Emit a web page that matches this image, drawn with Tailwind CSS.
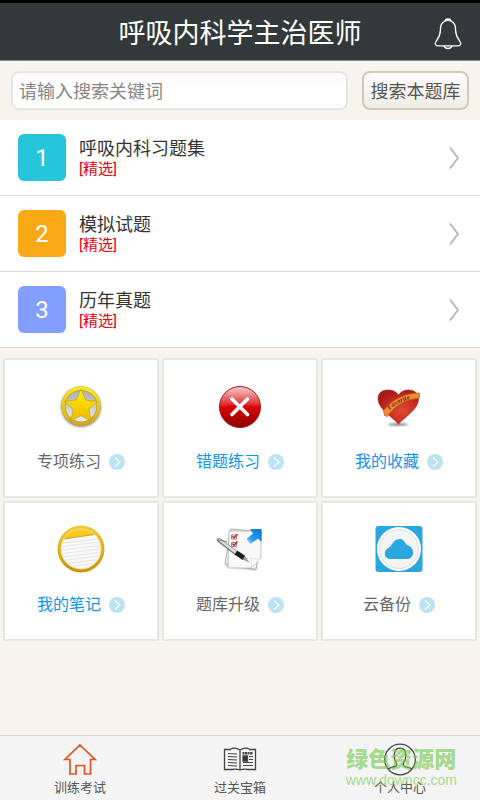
<!DOCTYPE html>
<html lang="zh-CN">
<head>
    <meta charset="UTF-8">
    <meta name="viewport" content="width=device-width, initial-scale=1.0">
    <title>呼吸内科学主治医师</title>
    <script src="https://cdn.jsdelivr.net/npm/@tailwindcss/browser@4"></script>
</head>
<body class="min-h-screen flex flex-col bg-[#f7f4ed] font-['Roboto','Noto_Sans_CJK_SC',sans-serif] text-[#333]">
    <header class="grid grid-cols-[56px_1fr_56px] items-center h-[61px] pt-1 bg-[#33383b] border-t-3 border-t-black border-b border-b-[#85898a]">
        <h1 class="col-start-2 text-center text-[27px] leading-8 text-white whitespace-nowrap">呼吸内科学主治医师</h1>
        <button type="button" aria-label="消息" class="justify-self-end mr-4">
            <svg class="w-8 h-8" viewBox="0 0 32 32" fill="none" stroke="#fff" stroke-width="1.3" stroke-linejoin="round">
                <path d="M13.2 2.8C13.5 .4 18.500 .4 18.800 2.800C22.300 4.200 23.600 7.500 23.600 12C23.600 18 25.500 20 28 23.500C29.700 26 28.700 27.800 26 27.800H6C3.300 27.800 2.300 26 4 23.500C6.500 20 8.400 18 8.400 12C8.400 7.500 9.700 4.200 13.200 2.800Z"/>
                <path d="M13.200 2.800Q16 1.800 18.800 2.800M12 28Q13 30.500 16 30.500Q19 30.500 20 28"/>
            </svg>
        </button>
    </header>

    <form class="flex gap-3.5 px-[11px] py-2.5">
        <input type="search" aria-label="搜索关键词" placeholder="请输入搜索关键词"
            class="flex-1 min-w-0 h-[39px] px-1.5 pt-0.5 text-lg rounded-lg border-2 border-[#e3e5e6] bg-linear-to-b from-[#fbfaf8] to-white to-50% placeholder:text-[#868686] outline-none">
        <button type="submit"
            class="h-[39px] w-[107px] pt-0.5 text-lg whitespace-nowrap text-[#555] rounded-lg border-2 border-[#d0cabd] bg-linear-to-b from-[#fdfcfa] to-[#f0ede6]">搜索本题库</button>
    </form>

    <ul class="bg-white">
        <li class="border-b border-[#d9d9d9]">
            <a href="#" class="flex items-center h-[75px] pl-[18px] pr-5">
                <span class="flex items-center justify-center w-12 h-[47px] rounded-md bg-[#26c6da] text-2xl text-white">1</span>
                <span class="flex-1 flex flex-col ml-[13px] pt-0.5">
                    <span class="text-lg leading-5">呼吸内科习题集</span>
                    <span class="text-[15px] leading-5 text-[#e5000b]">[精选]</span>
                </span>
                <svg class="w-3 h-6" viewBox="0 0 12 24" fill="none" stroke="#b5b5b5" stroke-width="1.8"><path d="M2 1.500L10 12L2 22.500"/></svg>
            </a>
        </li>
        <li class="border-b border-[#d9d9d9]">
            <a href="#" class="flex items-center h-[75px] pl-[18px] pr-5">
                <span class="flex items-center justify-center w-12 h-[47px] rounded-md bg-[#faa916] text-2xl text-white">2</span>
                <span class="flex-1 flex flex-col ml-[13px] pt-0.5">
                    <span class="text-lg leading-5">模拟试题</span>
                    <span class="text-[15px] leading-5 text-[#e5000b]">[精选]</span>
                </span>
                <svg class="w-3 h-6" viewBox="0 0 12 24" fill="none" stroke="#b5b5b5" stroke-width="1.8"><path d="M2 1.500L10 12L2 22.500"/></svg>
            </a>
        </li>
        <li class="border-b border-[#d9d9d9]">
            <a href="#" class="flex items-center h-[75px] pl-[18px] pr-5">
                <span class="flex items-center justify-center w-12 h-[47px] rounded-md bg-[#829fff] text-2xl text-white">3</span>
                <span class="flex-1 flex flex-col ml-[13px] pt-0.5">
                    <span class="text-lg leading-5">历年真题</span>
                    <span class="text-[15px] leading-5 text-[#e5000b]">[精选]</span>
                </span>
                <svg class="w-3 h-6" viewBox="0 0 12 24" fill="none" stroke="#b5b5b5" stroke-width="1.8"><path d="M2 1.500L10 12L2 22.500"/></svg>
            </a>
        </li>
    </ul>

    <!-- round arrow shared by all tiles -->
    <svg class="hidden">
        <symbol id="go" viewBox="0 0 16 16">
            <circle cx="8" cy="8" r="8" fill="#bce3f1"/>
            <path d="M6 3.500L11 8L6 12.500" fill="none" stroke="#fff" stroke-width="1.1"/>
        </symbol>
    </svg>

    <main class="grid grid-cols-3 gap-[3px] px-[3px] pt-2.5 text-base text-[#666]">
        <a href="#" class="flex flex-col items-center h-[140px] pt-[22px] bg-white border-2 border-[#e5e7e5] rounded-xs">
            <svg class="w-12 h-12" viewBox="0 0 48 48">
                <defs>
                    <linearGradient id="gold" x1="0" y1="0" x2="0" y2="1"><stop offset="0" stop-color="#f7ea1c"/><stop offset="1" stop-color="#dca81c"/></linearGradient>
                    <linearGradient id="star" x1="0" y1="0" x2="0" y2="1"><stop offset="0" stop-color="#fff000"/><stop offset="1" stop-color="#efb800"/></linearGradient>
                    <linearGradient id="well" x1="0" y1="0" x2="0" y2="1"><stop offset="0" stop-color="#aaa"/><stop offset="1" stop-color="#eee"/></linearGradient>
                    <filter id="soft" x="-30%" y="-30%" width="160%" height="160%"><feGaussianBlur stdDeviation="1.2"/></filter>
                </defs>
                <circle cx="24" cy="25" r="20" fill="#555" opacity=".65" filter="url(#soft)"/>
                <circle cx="24" cy="24" r="17" fill="url(#well)"/>
                <circle cx="24" cy="24" r="17.500" fill="none" stroke="#b39a1a" stroke-width="4"/>
                <circle cx="24" cy="24" r="17.800" fill="none" stroke="url(#gold)" stroke-width="3.400"/>
                <path d="M24 7L28.800 18L40.500 19.500L31.800 27.500L34.500 39.500L24 33.500L13.500 39.500L16.200 27.500L7.500 19.500L19.200 18Z" fill="url(#star)" stroke="#a58c24" stroke-width=".5"/>
            </svg>
            <span class="flex items-center gap-2 mt-5">专项练习<svg class="w-4 h-4"><use href="#go"/></svg></span>
        </a>
        <a href="#" class="flex flex-col items-center h-[140px] pt-[22px] bg-white border-2 border-[#e5e7e5] rounded-xs text-[#1094e8]">
            <svg class="w-12 h-12" viewBox="0 0 48 48">
                <defs>
                    <linearGradient id="red" x1="0" y1="0" x2="0" y2="1"><stop offset="0" stop-color="#d92a2a"/><stop offset=".5" stop-color="#dc0505"/><stop offset="1" stop-color="#800"/></linearGradient>
                    <linearGradient id="gloss" x1="0" y1="0" x2="0" y2="1"><stop offset="0" stop-color="#fff" stop-opacity=".75"/><stop offset="1" stop-color="#fff" stop-opacity=".05"/></linearGradient>
                </defs>
                <circle cx="24" cy="25" r="20.500" fill="url(#red)" stroke="#a31d1d"/>
                <path d="M4 25A20 20 0 0 1 44 25Q24 21 4 25Z" fill="url(#gloss)"/>
                <path d="M16 17L31.500 32.500M31.500 17L16 32.500" stroke="#fff" stroke-width="3.600" stroke-linecap="round"/>
            </svg>
            <span class="flex items-center gap-2 mt-5">错题练习<svg class="w-4 h-4"><use href="#go"/></svg></span>
        </a>
        <a href="#" class="flex flex-col items-center h-[140px] pt-[22px] bg-white border-2 border-[#e5e7e5] rounded-xs text-[#1094e8]">
            <svg class="w-12 h-12" viewBox="0 0 48 48">
                <defs>
                    <radialGradient id="heart" cx=".6" cy=".6" r=".6"><stop offset="0" stop-color="#e04a35"/><stop offset=".6" stop-color="#c92d22"/><stop offset="1" stop-color="#a51c18"/></radialGradient>
                </defs>
                <ellipse cx="23" cy="42.500" rx="10" ry="1.500" fill="#555" opacity=".7" filter="url(#soft)"/>
                <path d="M23.500 42C16 34 3.500 27 3 17C3 10 8 8 13 8C18 8 21 9.500 23.500 13C26 9.500 29 8 33.500 8C39 8 43.500 11 43.500 17C43.500 27 31 34 23.500 42Z" fill="url(#heart)" stroke="#9d211a" stroke-width=".6"/>
                <path d="M8.500 28.500C18 16.500 31 11 44.500 11L44.500 15.500L42.500 16.500C30 17.500 19 24 12.500 34.500L9.500 33.500Z" fill="#f08a35" stroke="#bb5719" stroke-width=".7"/>
                <path id="ribbon" d="M14.500 28Q24 19 38 16.500" fill="none"/>
                <text class="font-['Liberation_Serif',serif] font-bold" font-size="6.500" fill="#7c250b"><textPath href="#ribbon">Favorite</textPath></text>
            </svg>
            <span class="flex items-center gap-2 mt-5">我的收藏<svg class="w-4 h-4"><use href="#go"/></svg></span>
        </a>
        <a href="#" class="flex flex-col items-center h-[140px] pt-[22px] bg-white border-2 border-[#e5e7e5] rounded-xs text-[#1094e8]">
            <svg class="w-12 h-12" viewBox="0 0 48 48">
                <defs>
                    <linearGradient id="rim" x1="0" y1="0" x2="0" y2="1"><stop offset="0" stop-color="#f2cb35"/><stop offset="1" stop-color="#c4930f"/></linearGradient>
                    <clipPath id="page"><circle cx="24" cy="24" r="20"/></clipPath>
                </defs>
                <circle cx="24" cy="24" r="23.500" fill="url(#rim)"/>
                <g clip-path="url(#page)">
                    <rect width="48" height="48" fill="#f9f9f9"/>
                    <path d="M0 0H48V8L7 14L0 14Z" fill="#fcc91b"/>
                    <path d="M5 14.300L43 8.700" stroke="#c89412" stroke-width=".8"/>
                    <path d="M2 18.500L46 13M2 22L46 16.500M2 25.500L46 20M2 29L46 23.500M2 32.500L46 27M2 36L46 30.500M2 39.500L46 34M2 43L46 37.500M2 46.500L46 41" stroke="#e2e2e2" stroke-width=".9"/>
                </g>
                <circle cx="24" cy="24" r="20" fill="none" stroke="#f8e48c" stroke-width="1"/>
            </svg>
            <span class="flex items-center gap-2 mt-5">我的笔记<svg class="w-4 h-4"><use href="#go"/></svg></span>
        </a>
        <a href="#" class="flex flex-col items-center h-[140px] pt-[22px] bg-white border-2 border-[#e5e7e5] rounded-xs">
            <svg class="w-12 h-12" viewBox="0 0 48 48">
                <defs>
                    <linearGradient id="up" x1="1" y1="0" x2="0" y2="1"><stop offset="0" stop-color="#0875da"/><stop offset=".6" stop-color="#2795ed"/><stop offset="1" stop-color="#a8d8fa"/></linearGradient>
                </defs>
                <path d="M14 5L44 7L40 45L10 41Z" fill="#777" opacity=".7" filter="url(#soft)"/>
                <path d="M15 4L46 7L40 44.500L9 39Z" fill="#eee" stroke="#999" stroke-width=".7"/>
                <path d="M13 6H45V33L35 43H12Z" fill="#f8f8f8" stroke="#aaa" stroke-width=".7"/>
                <path d="M35 43Q37 38 35 33Q40 36 45 33Z" fill="#fff" stroke="#ccc" stroke-width=".5"/>
                <path d="M15.500 10H20.500V14H15.500ZM15.500 17.500H20.500V21.500H15.500Z" fill="#fff" stroke="#a55" stroke-width=".8"/>
                <path d="M16.500 11L18 13L21.500 9M16.500 18.500L18 20.500L21.500 16.500" fill="none" stroke="#c1272d" stroke-width="1.400"/>
                <path d="M3 15L20 28" stroke="#777" stroke-width="4.400" stroke-linecap="round"/>
                <path d="M3 14.500L20 27.500" stroke="#ddd" stroke-width="2.600" stroke-linecap="round"/>
                <path d="M1.500 14.500L11 17" stroke="#777" stroke-width="1"/>
                <path d="M20 27.500L28 33" stroke="#1c1c1c" stroke-width="4.800"/>
                <path d="M28.800 31L33.500 37.500L26.500 34.500Z" fill="#999"/>
                <path d="M34 4L45.500 4V17L42 13.500L34.500 19L30.500 14L37 8.500Z" fill="url(#up)"/>
            </svg>
            <span class="flex items-center gap-2 mt-5">题库升级<svg class="w-4 h-4"><use href="#go"/></svg></span>
        </a>
        <a href="#" class="flex flex-col items-center h-[140px] pt-[22px] bg-white border-2 border-[#e5e7e5] rounded-xs">
            <svg class="w-12 h-12" viewBox="0 0 48 48">
                <rect x=".5" y="1" width="47" height="46" rx="3" fill="#2aa7df"/>
                <circle cx="24" cy="24" r="22" fill="#fff"/>
                <circle cx="24" cy="24" r="19.500" fill="#f4f4f4" stroke="#dfdfdf" stroke-width="1"/>
                <path d="M15 34C8.500 34 8 25 14 22.500C16 21.500 17 18.500 19.500 16C22 13.500 26.500 13 29 16C30.500 18 31 19.500 33 20.500C40.500 23 39.500 34 32 34Z" fill="#2aa7df"/>
            </svg>
            <span class="flex items-center gap-2 mt-5">云备份<svg class="w-4 h-4"><use href="#go"/></svg></span>
        </a>
    </main>

    <nav class="relative grid grid-cols-3 h-[65px] mt-auto pt-[7px] bg-[#f4f4f4] border-t border-[#ddd9d6] text-[13px] leading-[22px] text-[#555]">
        <a href="#" class="flex flex-col items-center">
            <svg class="w-9 h-[34px]" viewBox="0 0 36 34" fill="none" stroke="#e25320" stroke-width="1.7">
                <path d="M18 2L33 16.500H28.500V31H22.500V22.500H14V31H8V16.500H3Z"/>
            </svg>
            训练考试
        </a>
        <a href="#" class="flex flex-col items-center">
            <svg class="w-9 h-[34px]" viewBox="0 0 36 34" fill="none" stroke="#444" stroke-width="1.300">
                <path d="M18 7Q14 4.500 10 5.500L8 6.500H2.500V26.500H10Q14 25.500 18 27Q22 25.500 26 26.500H33.500V6.500H28L26 5.500Q22 4.500 18 7V27"/>
                <path d="M6 10.500L15 11M6 13.500L15 14M6 16.500L15 17M6 19.500L15 20M6 22.500L15 23M21 22.500H31M21 19.500H31M27 13.500H31M27 16.500H31" stroke-width="1.200"/>
                <path d="M20.500 10.200H31" stroke-width="2.500" stroke-dasharray="2 .5"/>
                <path d="M21 13H25.500V18H21Z" fill="#333"/>
            </svg>
            过关宝箱
        </a>
        <a href="#" class="flex flex-col items-center">
            <svg class="w-9 h-[34px]" viewBox="0 0 36 34" fill="none" stroke="#444" stroke-width="1.300">
                <circle cx="18" cy="16.500" r="15.300"/>
                <path d="M6 26Q8 24.500 13 23.500Q15.500 22.500 14.500 20C12 17 12 13 12.500 10C13.500 3.500 22.500 3.500 23.500 10C24 13 24 17 21.500 20C20.500 22.500 23 23.500 23 23.500Q28 24.500 30 26"/>
            </svg>
            个人中心
        </a>
        <p class="absolute right-[23px] bottom-[10px] flex flex-col items-center text-[#77c94c]/65 whitespace-nowrap pointer-events-none">
            <span class="text-[22px] leading-5 font-black">绿色资源网</span>
            <span class="font-['Liberation_Sans',sans-serif] text-sm">www.downcc.com</span>
        </p>
    </nav>
</body>
</html>
